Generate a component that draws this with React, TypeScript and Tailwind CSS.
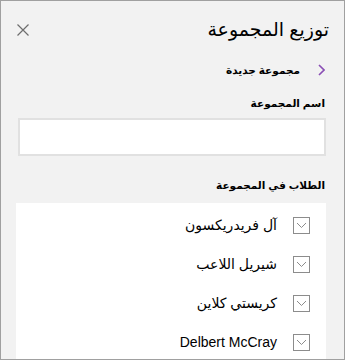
import React from "react";

const names = ["آل فريدريكسون", "شيريل اللاعب", "كريستي كلاين", "Delbert McCray"];

function Check() {
  return (
    <div className="w-[17px] h-[17px] border border-[#8c8c8c] bg-white flex items-center justify-center shrink-0">
      <svg width="11" height="7" viewBox="0 0 11 7">
        <path d="M1 1 L5.5 5.5 L10 1" fill="none" stroke="#8c8c8c" strokeWidth="1" />
      </svg>
    </div>
  );
}

export default function App() {
  return (
    <div
      dir="rtl"
      className="w-[345px] h-[360px] border border-[#a0a0a0] bg-[#f2f2f2] overflow-hidden flex flex-col text-black"
      style={{ fontFamily: '"Liberation Sans", "DejaVu Sans", sans-serif' }}
    >
      <div className="shrink-0 flex items-center justify-between pr-[15px] pl-[16px] pt-[14px] h-[44px]">
        <div className="text-[19px] leading-[28px]">توزيع المجموعة</div>
        <svg width="12" height="12" viewBox="0 0 12 12">
          <path d="M0.5 0.5 L11.5 11.5 M11.5 0.5 L0.5 11.5" stroke="#6e6e6e" strokeWidth="1.2" />
        </svg>
      </div>
      <div className="shrink-0 flex items-center pr-[19px] mt-[18px] h-[14px] gap-[18px]">
        <svg width="7" height="12" viewBox="0 0 7 12">
          <path d="M1 1 L6 6 L1 11" fill="none" stroke="#8a4fb5" strokeWidth="1.6" />
        </svg>
        <div className="text-[10.5px] font-bold leading-[14px]">مجموعة جديدة</div>
      </div>
      <div className="shrink-0 pr-[19px] mt-[19px] text-[10.5px] font-bold leading-[14px]">اسم المجموعة</div>
      <div className="shrink-0 mr-[18px] mt-[8px] w-[308px] h-[38px] bg-white border-2 border-[#e1e1e1]"></div>
      <div className="shrink-0 pr-[19px] mt-[22px] text-[10.5px] font-bold leading-[14px]">الطلاب في المجموعة</div>
      <div className="mr-[18px] mt-[11px] w-[310px] flex-1 bg-white pt-[14px] pr-[16px] flex flex-col">
        {names.map((n) => (
          <div key={n} className="shrink-0 flex items-center gap-[16px] h-[17px] mb-[22px]">
            <Check />
            <div className="text-[14px] leading-[17px]">{n}</div>
          </div>
        ))}
      </div>
    </div>
  );
}
